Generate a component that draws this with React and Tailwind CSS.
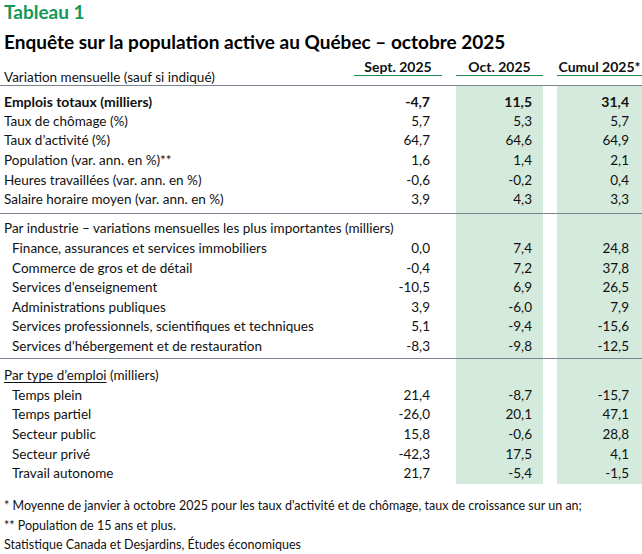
import React from "react";

const FONT = { fontFamily: "Lato, 'Open Sans', sans-serif" };

function Row({ label, a, b, c, bold, indent, h = "h-[19.6px]", children }) {
  const w = bold ? "font-bold text-[14px]" : "font-normal";
  return (
    <div className={`grid grid-cols-[minmax(0,1fr)_88px_87px_85px] gap-x-[14px] ${h} leading-[19.6px] text-[13.5px] text-[#111]`}>
      <div className={`whitespace-nowrap ${indent ? "pl-[12px]" : "pl-[4px]"} ${w}`}>{children ?? label}</div>
      <div className={`text-right pr-[12px] ${w}`}>{a}</div>
      <div className={`text-right pr-[11px] bg-[#d4eadd] ${w}`}>{b}</div>
      <div className={`text-right pr-[13px] bg-[#d4eadd] ${w}`}>{c}</div>
    </div>
  );
}

function Line() {
  return <div className="h-px bg-[#7b8591]" />;
}

export default function App() {
  const s1 = [
    ["Taux de chômage (%)", "5,7", "5,3", "5,7"],
    ["Taux d’activité (%)", "64,7", "64,6", "64,9"],
    ["Population (var. ann. en %)**", "1,6", "1,4", "2,1"],
    ["Heures travaillées (var. ann. en %)", "-0,6", "-0,2", "0,4"],
    ["Salaire horaire moyen (var. ann. en %)", "3,9", "4,3", "3,3"],
  ];
  const s2 = [
    ["Finance, assurances et services immobiliers", "0,0", "7,4", "24,8"],
    ["Commerce de gros et de détail", "-0,4", "7,2", "37,8"],
    ["Services d’enseignement", "-10,5", "6,9", "26,5"],
    ["Administrations publiques", "3,9", "-6,0", "7,9"],
    ["Services professionnels, scientifiques et techniques", "5,1", "-9,4", "-15,6"],
    ["Services d’hébergement et de restauration", "-8,3", "-9,8", "-12,5"],
  ];
  const s3 = [
    ["Temps plein", "21,4", "-8,7", "-15,7"],
    ["Temps partiel", "-26,0", "20,1", "47,1"],
    ["Secteur public", "15,8", "-0,6", "28,8"],
    ["Secteur privé", "-42,3", "17,5", "4,1"],
    ["Travail autonome", "21,7", "-5,4", "-1,5"],
  ];
  return (
    <div className="w-[642px] h-[554px] bg-white overflow-hidden" style={FONT}>
      <div className="pl-[4px] text-[19px] leading-[24px] font-bold text-[#13985b]">Tableau 1</div>
      <div className="mt-[6px] pl-[4px] text-[19px] leading-[24px] font-bold text-black">
        Enquête sur la population active au Québec – octobre 2025
      </div>
      <div className="grid grid-cols-[minmax(0,1fr)_88px_87px_85px] gap-x-[14px] h-[31px] items-end text-[13.5px] text-[#111]">
        <div className="pl-[4px] leading-[16px] whitespace-nowrap">Variation mensuelle (sauf si indiqué)</div>
        <div className="mb-[9px] leading-[16px] text-center text-[14px] font-bold border-b border-[#1f8a50] whitespace-nowrap">Sept. 2025</div>
        <div className="mb-[9px] leading-[16px] text-center text-[14px] font-bold border-b border-[#1f8a50] whitespace-nowrap">Oct. 2025</div>
        <div className="mb-[9px] leading-[16px] text-center text-[14px] font-bold border-b border-[#1f8a50] whitespace-nowrap">Cumul 2025*</div>
      </div>
      <Line />
      <Row h="h-[6.2px]" />
      <Row label="Emplois totaux (milliers)" a="-4,7" b="11,5" c="31,4" bold />
      {s1.map((r) => (
        <Row key={r[0]} label={r[0]} a={r[1]} b={r[2]} c={r[3]} />
      ))}
      <Row h="h-[3px]" />
      <Line />
      <Row h="h-[5.6px]" />
      <Row label="Par industrie – variations mensuelles les plus importantes (milliers)" />
      {s2.map((r) => (
        <Row key={r[0]} label={r[0]} a={r[1]} b={r[2]} c={r[3]} indent />
      ))}
      <Row h="h-[1.6px]" />
      <Line />
      <Row h="h-[7.2px]" />
      <Row>
        <span className="underline underline-offset-2">Par type d’emploi</span> (milliers)
      </Row>
      {s3.map((r) => (
        <Row key={r[0]} label={r[0]} a={r[1]} b={r[2]} c={r[3]} indent />
      ))}
      <div className="mt-[12.2px] pl-[4px] text-[12.5px] leading-[19.6px] text-[#111]">
        <div className="whitespace-nowrap">* Moyenne de janvier à octobre 2025 pour les taux d'activité et de chômage, taux de croissance sur un an;</div>
        <div>** Population de 15 ans et plus.</div>
        <div>Statistique Canada et Desjardins, Études économiques</div>
      </div>
    </div>
  );
}
